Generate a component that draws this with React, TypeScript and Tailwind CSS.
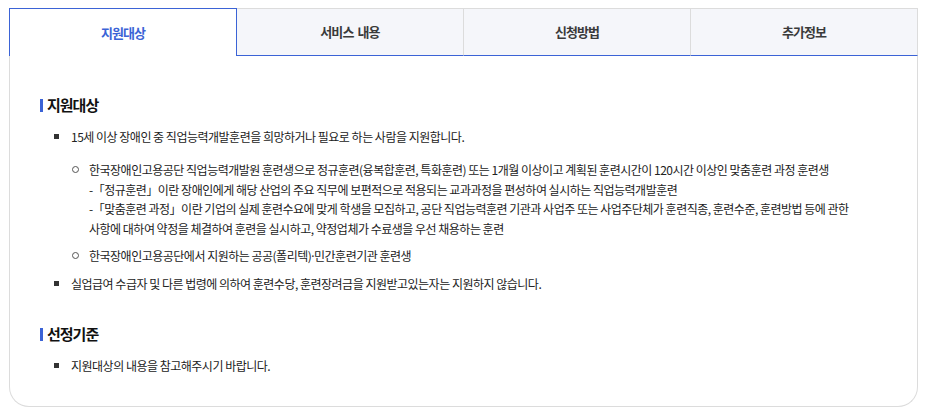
const tabs = ['지원대상', '서비스 내용', '신청방법', '추가정보'];

function Square() {
  return (
    <span className="flex h-[19.5px] w-[5px] shrink-0 items-center">
      <span className="block h-[5px] w-[5px] bg-[#333]"></span>
    </span>
  );
}

function Circle() {
  return (
    <span className="flex h-[19.5px] w-[7px] shrink-0 items-center">
      <span className="block h-[7px] w-[7px] rounded-full border border-[#555]"></span>
    </span>
  );
}

function Heading({ children, className = '' }: { children: React.ReactNode; className?: string }) {
  return (
    <h3 className={`flex items-center gap-[4px] text-[15px] leading-[20px] font-bold tracking-[-1px] text-[#111] ${className}`}>
      <span className="block h-[13px] w-[3px] bg-[#3b63d6]"></span>
      {children}
    </h3>
  );
}

export default function App() {
  return (
    <div
      className="bg-white pt-[8px] pr-[10px] pl-[9px] pb-[11px]"
      style={{ fontFamily: '"Noto Sans CJK KR", "Noto Sans", sans-serif' }}
    >
      {/* Tabs */}
      <div className="flex h-[48px]">
        {tabs.map((tab, i) =>
          i === 0 ? (
            <div
              key={tab}
              className="flex flex-1 items-center justify-center border-x border-t border-[#3b63d6] bg-white text-[13px] font-bold tracking-[-0.9px] [word-spacing:2px] text-[#3b63d6]"
            >
              {tab}
            </div>
          ) : (
            <div
              key={tab}
              className="flex flex-1 items-center justify-center border-t border-r border-b border-t-[#dcdcdc] border-r-[#dcdcdc] border-b-[#3b63d6] bg-[#f5f6fa] text-[13px] font-bold tracking-[-0.9px] [word-spacing:2px] text-[#3a3a3a]"
            >
              {tab}
            </div>
          )
        )}
      </div>

      {/* Body */}
      <div className="rounded-b-[20px] border-x border-b border-[#dcdcdc] pt-[39px] pr-[30px] pb-[30px] pl-[30px] text-[12px] leading-[19.5px] tracking-[-0.5px] text-[#222]">
        <Heading>지원대상</Heading>
        <ul className="mt-[12px] ml-[14px] flex flex-col gap-[7.5px]">
          <li className="flex gap-[12px]">
            <Square />
            <div>
              <p>15세 이상 장애인 중 직업능력개발훈련을 희망하거나 필요로 하는 사람을 지원합니다.</p>
              <ul className="mt-[13.5px] ml-[1px] flex flex-col gap-[7.5px]">
                <li className="flex gap-[10px]">
                  <Circle />
                  <p>
                    한국장애인고용공단 직업능력개발원 훈련생으로 정규훈련(융복합훈련, 특화훈련) 또는 1개월 이상이고 계획된 훈련시간이 120시간 이상인 맞춤훈련 과정 훈련생
                    <br />
                    -「정규훈련」이란 장애인에게 해당 산업의 주요 직무에 보편적으로 적용되는 교과과정을 편성하여 실시하는 직업능력개발훈련
                    <br />
                    -「맞춤훈련 과정」이란 기업의 실제 훈련수요에 맞게 학생을 모집하고, 공단 직업능력훈련 기관과 사업주 또는 사업주단체가 훈련직종, 훈련수준, 훈련방법 등에 관한
                    <br />
                    사항에 대하여 약정을 체결하여 훈련을 실시하고, 약정업체가 수료생을 우선 채용하는 훈련
                  </p>
                </li>
                <li className="flex gap-[10px]">
                  <Circle />
                  <p>
                    한국장애인고용공단에서 지원하는 공공(폴리텍)
                    <span style={{ fontFamily: '"Noto Sans", sans-serif' }}>·</span>
                    민간훈련기관 훈련생
                  </p>
                </li>
              </ul>
            </div>
          </li>
          <li className="flex gap-[12px]">
            <Square />
            <p>실업급여 수급자 및 다른 법령에 의하여 훈련수당, 훈련장려금을 지원받고있는자는 지원하지 않습니다.</p>
          </li>
        </ul>

        <Heading className="mt-[31px]">선정기준</Heading>
        <ul className="mt-[12px] ml-[14px] flex flex-col gap-[7.5px]">
          <li className="flex gap-[12px]">
            <Square />
            <p>지원대상의 내용을 참고해주시기 바랍니다.</p>
          </li>
        </ul>
      </div>
    </div>
  );
}
